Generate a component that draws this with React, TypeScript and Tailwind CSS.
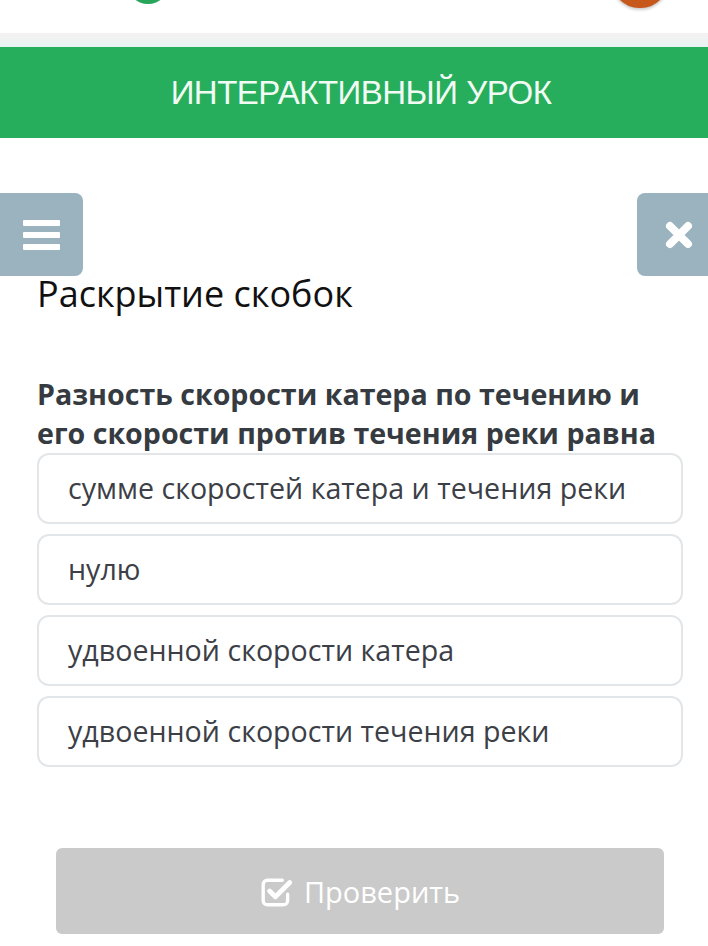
const options = [
  "сумме скоростей катера и течения реки",
  "нулю",
  "удвоенной скорости катера",
  "удвоенной скорости течения реки",
];

function CheckSquareIcon() {
  return (
    <svg width="34" height="32" viewBox="0 0 32 30" fill="none">
      <path d="M21 4 H7 a4 4 0 0 0 -4 4 v15 a4 4 0 0 0 4 4 h15 a4 4 0 0 0 4 -4 v-6" stroke="white" strokeWidth="3.2" strokeLinecap="round" />
      <path d="M9 14 L14.5 19.5 L28 6" stroke="white" strokeWidth="4.5" strokeLinecap="round" strokeLinejoin="round" />
    </svg>
  );
}

export default function App() {
  return (
    <div className="w-[708px] h-[946px] overflow-hidden bg-white relative" style={{ fontFamily: '"Open Sans", sans-serif' }}>
      {/* top header */}
      <div className="h-[33px] bg-white relative">
        <div className="absolute left-[127px] top-[-38px] w-[42px] h-[42px] rounded-full bg-[#27a65a]" />
        <div className="absolute left-[612px] top-[-46px] w-[56px] h-[54px] rounded-full bg-[#c7581c] shadow-[0_2px_3px_rgba(0,0,0,0.2)]" />
      </div>
      <div className="h-[14px] bg-gradient-to-b from-[#f6f1f3] to-[#e6f4f1]" />

      {/* banner */}
      <div className="h-[91px] bg-[#27ae5c] flex items-center justify-center pl-[14px]">
        <span className="text-[#f1fbf4] text-[33px] tracking-[-0.5px]" style={{ fontFamily: '"Liberation Sans", sans-serif' }}>
          ИНТЕРАКТИВНЫЙ УРОК
        </span>
      </div>

      {/* side buttons */}
      <div className="mt-[55px] flex justify-between">
        <button className="w-[83px] h-[83px] bg-[#9bb3bf] rounded-r-[8px] flex flex-col items-center justify-center gap-[6px]">
          <span className="block w-[37px] h-[6px] bg-white rounded-[1px]" />
          <span className="block w-[37px] h-[6px] bg-white rounded-[1px]" />
          <span className="block w-[37px] h-[6px] bg-white rounded-[1px]" />
        </button>
        <button className="w-[71px] h-[83px] bg-[#9bb3bf] rounded-l-[8px] flex items-center justify-center pl-[12px]">
          <svg width="32" height="32" viewBox="0 0 32 32">
            <path d="M7 7 L25 25 M25 7 L7 25" stroke="white" strokeWidth="8" strokeLinecap="round" />
          </svg>
        </button>
      </div>

      <div className="pl-[37px] pr-[25px]">
        <h1 className="text-[36px] leading-[42px] text-[#111] -mt-[3px]">Раскрытие скобок</h1>

        <p className="mt-[59px] text-[28.6px] leading-[39px] font-bold text-[#353b41] pr-[10px]">
          Разность скорости катера по течению и его скорости против течения реки равна
        </p>

        <div className="mt-[1px] flex flex-col gap-[10px]">
          {options.map((o) => (
            <div
              key={o}
              className="h-[71px] border-2 border-[#e3e6e8] rounded-[12px] flex items-center px-[29px] text-[28.6px] text-[#3c4046]"
            >
              {o}
            </div>
          ))}
        </div>
      </div>

      <div className="pl-[56px] mt-[81px]">
        <button className="w-[608px] h-[86px] bg-[#cacaca] rounded-[6px] flex items-center justify-center gap-[10px] text-white text-[29px] pt-[2px]">
          <CheckSquareIcon />
          Проверить
        </button>
      </div>
    </div>
  );
}
